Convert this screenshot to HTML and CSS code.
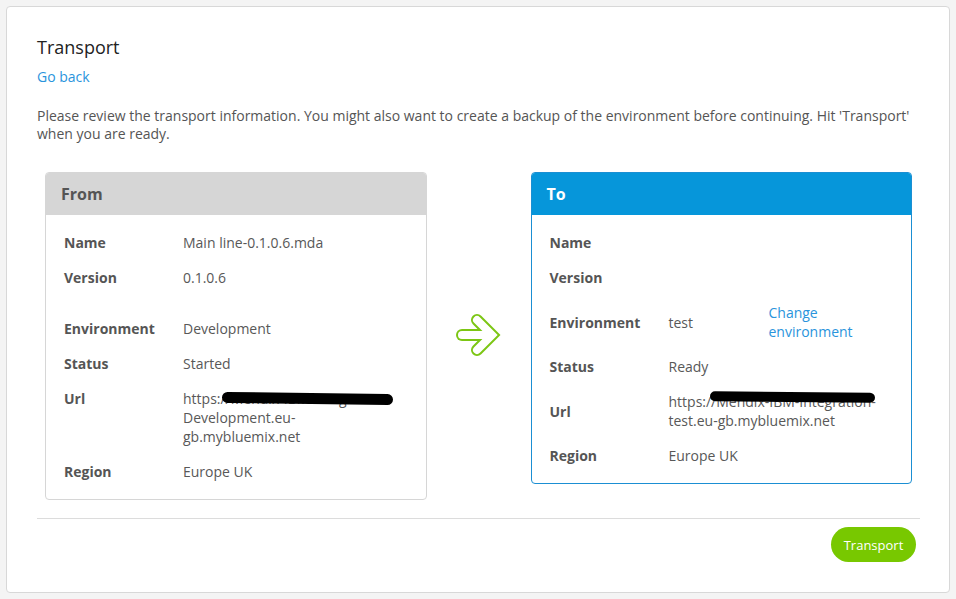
FILE: index.html
```html
<!DOCTYPE html>
<html lang="en">
<head>
<meta charset="utf-8">
<title>Transport</title>
<link rel="stylesheet" href="styles.css">
</head>
<body>
<div class="card">
  <h1 class="title">Transport</h1>
  <a class="link back" href="#">Go back</a>
  <p class="intro">Please review the transport information. You might also want to create a backup of the environment before continuing. Hit 'Transport' when you are ready.</p>

  <div class="panels">
    <section class="panel from">
      <header class="panel-head">From</header>
      <div class="panel-body">
        <div class="row"><span class="k">Name</span><span class="v">Main line-0.1.0.6.mda</span></div>
        <div class="row"><span class="k">Version</span><span class="v">0.1.0.6</span></div>
        <div class="row gap"><span class="k">Environment</span><span class="v">Development</span></div>
        <div class="row"><span class="k">Status</span><span class="v">Started</span></div>
        <div class="row"><span class="k">Url</span><span class="v url">https://Mendix-IBM-Integration-<br>Development.eu-<br>gb.mybluemix.net<span class="redact redact-from"></span></span></div>
        <div class="row"><span class="k">Region</span><span class="v">Europe UK</span></div>
      </div>
    </section>

    <div class="arrow-col">
      <svg class="arrow" width="52" height="48" viewBox="0 0 52 48" aria-hidden="true">
        <g fill="none" stroke-linecap="round" stroke-linejoin="miter" stroke-miterlimit="4">
          <g stroke="#7cc614" stroke-width="12">
            <path d="M8 24 H36"/>
            <path d="M23 9 L38 24 L23 39"/>
          </g>
          <g stroke="#ffffff" stroke-width="8">
            <path d="M8 24 H36"/>
            <path d="M23 9 L38 24 L23 39"/>
          </g>
        </g>
      </svg>
    </div>

    <section class="panel to">
      <header class="panel-head">To</header>
      <div class="panel-body">
        <div class="row three"><span class="k">Name</span><span class="v"></span><span></span></div>
        <div class="row three"><span class="k">Version</span><span class="v"></span><span></span></div>
        <div class="row three"><span class="k">Environment</span><span class="v">test</span><a class="link" href="#">Change<br>environment</a></div>
        <div class="row three"><span class="k">Status</span><span class="v">Ready</span><span></span></div>
        <div class="row url-row"><span class="k">Url</span><span class="v url">https://Mendix-IBM-Integration-<br>test.eu-gb.mybluemix.net<span class="redact redact-to"></span></span></div>
        <div class="row three"><span class="k">Region</span><span class="v">Europe UK</span><span></span></div>
      </div>
    </section>
  </div>

  <hr class="divider">
  <div class="actions">
    <button class="btn" type="button">Transport</button>
  </div>
</div>
</body>
</html>
```

FILE: styles.css
```css
* { box-sizing: border-box; }

html, body {
  margin: 0;
  background: #f4f4f4;
}

body {
  padding: 6px;
  font-family: "Open Sans", "Liberation Sans", sans-serif;
  font-size: 14px;
  color: #555;
}

.card {
  background: #fff;
  border: 1px solid #d8d8d8;
  border-radius: 4px;
  padding: 28px 29px 29px 30px;
  height: 587px;
}

.title {
  margin: 0;
  font-size: 18px;
  font-weight: 400;
  line-height: 24px;
  color: #222;
}

.link {
  color: #2a94dc;
  text-decoration: none;
}

.back {
  display: block;
  margin-top: 8px;
  line-height: 20px;
  width: max-content;
}

.intro {
  margin: 20px 0 0;
  line-height: 18px;
  color: #555;
}

.panels {
  display: grid;
  grid-template-columns: 1fr 104px 1fr;
  align-items: start;
  margin-top: 29px;
  padding: 0 8px;
}

.panel {
  border: 1px solid #d6d6d6;
  border-radius: 4px;
  overflow: hidden;
}

.panel.to {
  border-color: #1b8fd3;
}

.panel-head {
  height: 42px;
  padding: 0 15px;
  display: flex;
  align-items: center;
  font-size: 16px;
  font-weight: 700;
  background: #d6d6d6;
  color: #555;
}

.to .panel-head {
  background: #0696da;
  color: #fff;
}

.panel-body {
  padding: 10px 18px 10px 18px;
}

.row {
  display: grid;
  grid-template-columns: 119px 1fr;
  padding: 8px 0;
  line-height: 19px;
  align-items: start;
}

.row.gap {
  margin-top: 16px;
}

.row.three {
  grid-template-columns: 119px 100px 1fr;
  align-items: center;
}

.row.url-row {
  align-items: center;
}

.k {
  font-weight: 700;
  color: #555;
}

.v {
  color: #585858;
}

.url {
  position: relative;
}

.redact {
  position: absolute;
  background: #000;
  border-radius: 6px;
}

.redact-from {
  left: 39px;
  top: 4px;
  width: 171px;
  height: 11px;
  transform: rotate(0.8deg);
}

.redact-to {
  left: 41px;
  top: 0;
  width: 165px;
  height: 10px;
  transform: rotate(0.5deg);
}

.arrow-col {
  display: flex;
  justify-content: center;
  padding-top: 139px;
}

.arrow {
  display: block;
  margin-left: 3px;
}

.divider {
  margin: 18px 0 0;
  border: 0;
  border-top: 1px solid #dcdcdc;
  height: 0;
}

.actions {
  display: flex;
  justify-content: flex-end;
  padding: 8px 4px 0 0;
}

.btn {
  height: 35px;
  width: 85px;
  border: 0;
  border-radius: 18px;
  background: #78c800;
  color: #fff;
  font-family: "Open Sans", "Liberation Sans", sans-serif;
  font-size: 13px;
  padding: 0;
  cursor: pointer;
}
```
